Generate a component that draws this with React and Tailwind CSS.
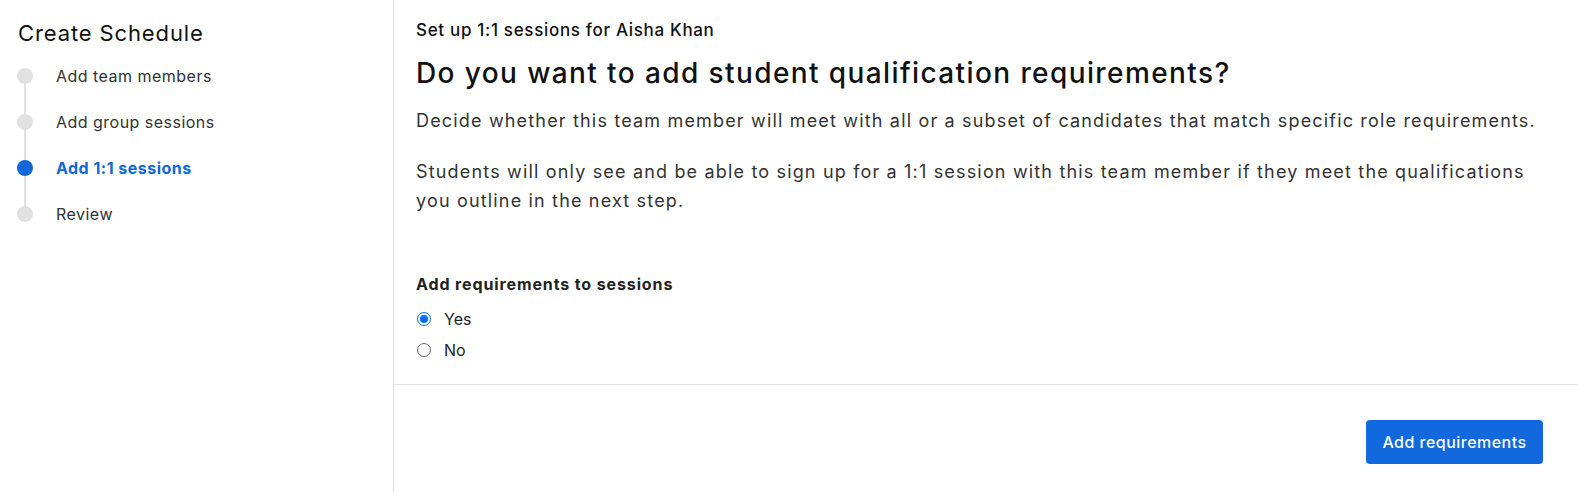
import { useState } from 'react';

const steps = [
  { label: 'Add team members' },
  { label: 'Add group sessions' },
  { label: 'Add 1:1 sessions', active: true },
  { label: 'Review' },
];

export default function App() {
  const [req, setReq] = useState('yes');

  return (
    <div className="h-screen flex bg-white text-[#1f1f1f]" style={{ fontFamily: 'Inter, "Noto Sans", sans-serif' }}>
      {/* Sidebar */}
      <div className="w-[394px] shrink-0 border-r border-[#e3e3e3] pl-[17px] pt-[19px]">
        <div className="text-[22px] leading-[28px] text-[#111] pl-px tracking-[0.04em]">Create Schedule</div>
        <div className="mt-[21px]">
          {steps.map((s, i) => (
            <div key={s.label} className="flex h-[46px]">
              <div className="w-4 flex flex-col items-center">
                <span className={`w-4 h-4 rounded-full shrink-0 ${s.active ? 'bg-[#1267d8]' : 'bg-[#e1e1e1]'}`} />
                {i < steps.length - 1 && <span className="w-[2px] flex-1 bg-[#e1e1e1]" />}
              </div>
              <div className={`ml-[23px] text-[16px] leading-4 tracking-[0.03em] ${s.active ? 'text-[#1267d8] font-bold' : 'text-[#333]'}`}>{s.label}</div>
            </div>
          ))}
        </div>
      </div>

      {/* Main */}
      <div className="flex-1 flex flex-col">
        <div className="px-[22px] pt-[18px] pb-[19px] border-b border-[#e3e3e3]">
          <div className="text-[17px] leading-6 font-medium text-[#111] tracking-[0.04em]">Set up 1:1 sessions for Aisha Khan</div>
          <h1 className="mt-[15px] text-[28px] leading-8 font-medium text-[#111] tracking-[0.05em]">Do you want to add student qualification requirements?</h1>
          <p className="mt-[17px] text-[18px] leading-[29px] text-[#333] tracking-[0.065em]">
            Decide whether this team member will meet with all or a subset of candidates that match specific role requirements.
          </p>
          <p className="mt-[22px] text-[18px] leading-[29px] text-[#333] tracking-[0.065em] max-w-[1110px]">
            Students will only see and be able to sign up for a 1:1 session with this team member if they meet the qualifications you outline in the next step.
          </p>

          <div className="mt-[58px] text-[16px] leading-[22px] font-bold text-[#222] tracking-[0.055em]">Add requirements to sessions</div>
          <div className="mt-[8px] flex flex-col">
            {[['yes', 'Yes'], ['no', 'No']].map(([v, l]) => (
              <button key={v} onClick={() => setReq(v)} className="flex items-center h-[31px] text-left">
                <span className={`w-[14px] h-[14px] rounded-full flex items-center justify-center ml-px ${req === v ? 'border border-[#0a6cf0]' : 'border border-[#666]'}`}>
                  {req === v && <span className="w-2 h-2 rounded-full bg-[#0a6cf0]" />}
                </span>
                <span className="ml-[13px] text-[16px] text-[#222]">{l}</span>
              </button>
            ))}
          </div>
        </div>

        <div className="flex justify-end pt-[35px] pr-[35px]">
          <button className="h-11 w-[177px] rounded bg-[#1169dd] text-white text-[16px] font-medium tracking-[0.03em]">Add requirements</button>
        </div>
      </div>
    </div>
  );
}
